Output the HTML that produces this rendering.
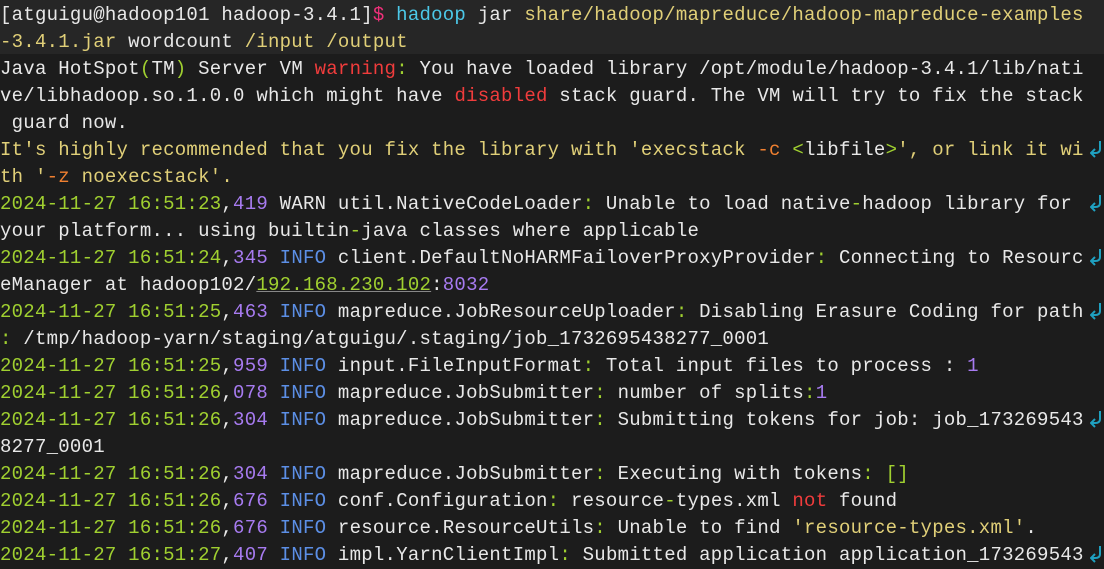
<!DOCTYPE html>
<html><head><meta charset="utf-8"><style>
html,body{margin:0;padding:0;background:#1c1c1c;width:1104px;height:562px;overflow:hidden}
.band{position:absolute;left:0;top:0;width:1104px;height:54px;background:#262626}
pre{position:absolute;left:0;top:2px;margin:0;font-family:"Liberation Mono",monospace;font-size:19px;letter-spacing:0.25px;line-height:27px;color:#e8e8e8;white-space:pre}
.g{color:#a0d030}.p{color:#a77bf0}.b{color:#5c8fe6}.y{color:#e0cf78}.r{color:#f03c3c}.o{color:#f08030}.c{color:#4cc8e8}.k{color:#f0307a}
.u{text-decoration:underline;text-decoration-color:#888}
svg{position:absolute;left:1090px}
</style></head><body>
<div class="band"></div>
<pre>[atguigu@hadoop101 hadoop-3.4.1]<span class="k">$</span> <span class="c">hadoop</span> jar <span class="y">share/hadoop/mapreduce/hadoop-mapreduce-examples</span>
<span class="y">-3.4.1.jar</span> wordcount <span class="y">/input /output</span>
Java HotSpot<span class="g">(</span>TM<span class="g">)</span> Server VM <span class="r">warning</span><span class="g">:</span> You have loaded library /opt/module/hadoop-3.4.1/lib/nati
ve/libhadoop.so.1.0.0 which might have <span class="r">disabled</span> stack guard. The VM will try to fix the stack
 guard now.
<span class="y">It's highly recommended that you fix the library with 'execstack <span class="o">-c</span> <span class="g">&lt;</span><span style="color:#e8e8e8">libfile</span><span class="g">&gt;</span>', or link it wi</span>
<span class="y">th '<span class="o">-z</span> noexecstack'.</span>
<span class="g">2024-11-27 16:51:23</span>,<span class="p">419</span> WARN util.NativeCodeLoader<span class="g">:</span> Unable to load native<span class="g">-</span>hadoop library for
your platform... using builtin<span class="g">-</span>java classes where applicable
<span class="g">2024-11-27 16:51:24</span>,<span class="p">345</span> <span class="b">INFO</span> client.DefaultNoHARMFailoverProxyProvider<span class="g">:</span> Connecting to Resourc
eManager at hadoop102/<span class="g u">192.168.230.102</span>:<span class="p">8032</span>
<span class="g">2024-11-27 16:51:25</span>,<span class="p">463</span> <span class="b">INFO</span> mapreduce.JobResourceUploader<span class="g">:</span> Disabling Erasure Coding for path
<span class="g">:</span> /tmp/hadoop-yarn/staging/atguigu/.staging/job_1732695438277_0001
<span class="g">2024-11-27 16:51:25</span>,<span class="p">959</span> <span class="b">INFO</span> input.FileInputFormat<span class="g">:</span> Total input files to process : <span class="p">1</span>
<span class="g">2024-11-27 16:51:26</span>,<span class="p">078</span> <span class="b">INFO</span> mapreduce.JobSubmitter<span class="g">:</span> number of splits<span class="g">:</span><span class="p">1</span>
<span class="g">2024-11-27 16:51:26</span>,<span class="p">304</span> <span class="b">INFO</span> mapreduce.JobSubmitter<span class="g">:</span> Submitting tokens for job: job_173269543
8277_0001
<span class="g">2024-11-27 16:51:26</span>,<span class="p">304</span> <span class="b">INFO</span> mapreduce.JobSubmitter<span class="g">:</span> Executing with tokens<span class="g">:</span> <span class="g">[]</span>
<span class="g">2024-11-27 16:51:26</span>,<span class="p">676</span> <span class="b">INFO</span> conf.Configuration<span class="g">:</span> resource<span class="g">-</span>types.xml <span class="r">not</span> found
<span class="g">2024-11-27 16:51:26</span>,<span class="p">676</span> <span class="b">INFO</span> resource.ResourceUtils<span class="g">:</span> Unable to find <span class="y">'resource-types.xml'</span>.
<span class="g">2024-11-27 16:51:27</span>,<span class="p">407</span> <span class="b">INFO</span> impl.YarnClientImpl<span class="g">:</span> Submitted application application_173269543</pre>
<svg style="top:140px" width="12" height="20" viewBox="0 0 12 20"><path d="M10 1V9Q10 13 5 13H2M5 9L1 13L5 17" fill="none" stroke="#1fa0c0" stroke-width="2"/></svg>
<svg style="top:194px" width="12" height="20" viewBox="0 0 12 20"><path d="M10 1V9Q10 13 5 13H2M5 9L1 13L5 17" fill="none" stroke="#1fa0c0" stroke-width="2"/></svg>
<svg style="top:248px" width="12" height="20" viewBox="0 0 12 20"><path d="M10 1V9Q10 13 5 13H2M5 9L1 13L5 17" fill="none" stroke="#1fa0c0" stroke-width="2"/></svg>
<svg style="top:302px" width="12" height="20" viewBox="0 0 12 20"><path d="M10 1V9Q10 13 5 13H2M5 9L1 13L5 17" fill="none" stroke="#1fa0c0" stroke-width="2"/></svg>
<svg style="top:410px" width="12" height="20" viewBox="0 0 12 20"><path d="M10 1V9Q10 13 5 13H2M5 9L1 13L5 17" fill="none" stroke="#1fa0c0" stroke-width="2"/></svg>
<svg style="top:545px" width="12" height="20" viewBox="0 0 12 20"><path d="M10 1V9Q10 13 5 13H2M5 9L1 13L5 17" fill="none" stroke="#1fa0c0" stroke-width="2"/></svg>
</body></html>
